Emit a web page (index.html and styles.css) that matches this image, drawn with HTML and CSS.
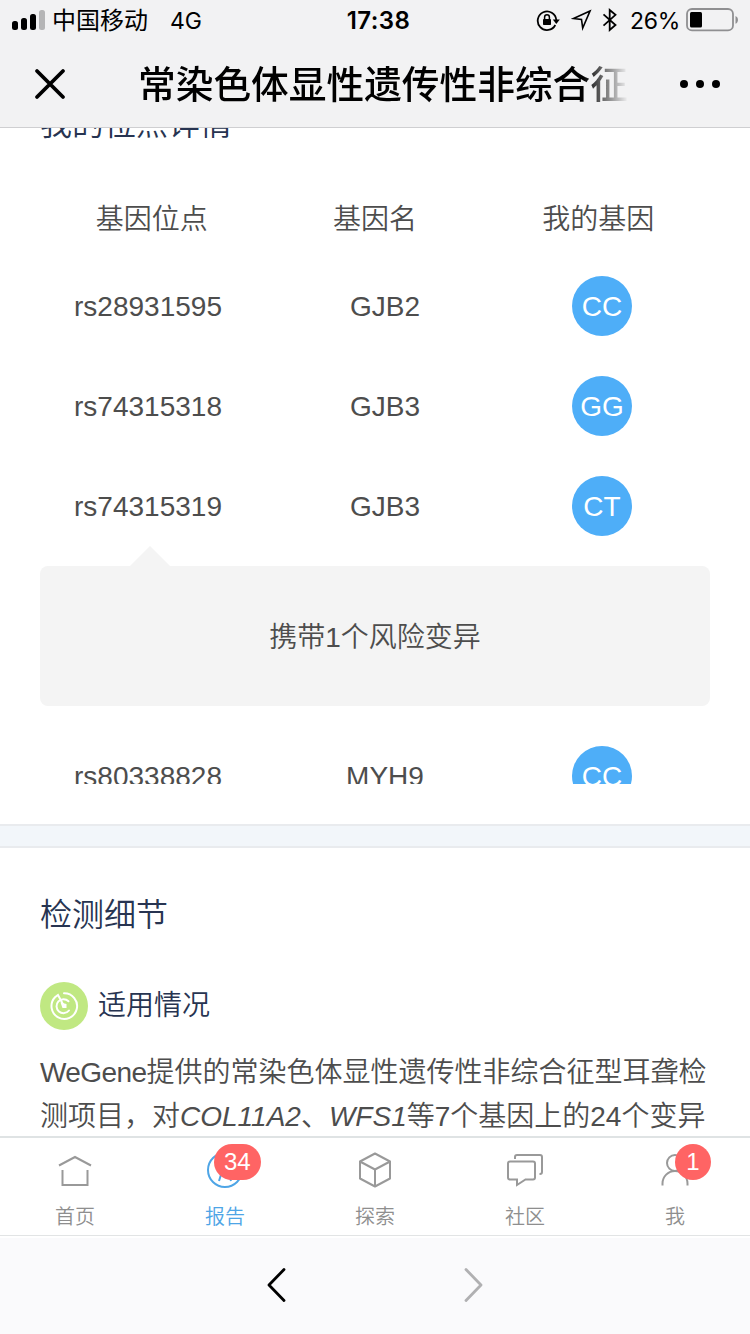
FILE: index.html
```html
<!DOCTYPE html>
<html lang="zh-CN">
<head>
  <meta charset="UTF-8" />
  <meta name="viewport" content="width=device-width, initial-scale=1.0"/>
  <title>常染色体显性遗传性非综合征型耳聋</title>
  <link rel="stylesheet" href="styles.css">
</head>
<body>

  <header class="header">
    <div class="status-bar">
      <div class="status-left">
        <svg class="signal" width="34" height="20" viewBox="0 0 34 20">
          <rect x="0" y="11" width="6" height="9" rx="2.5"/>
          <rect x="9" y="8" width="6" height="12" rx="2.5"/>
          <rect x="18" y="4" width="6" height="16" rx="2.5"/>
          <rect x="27" y="0" width="6" height="20" rx="2.5" fill="#b5b5b6"/>
        </svg>
        <span class="carrier">中国移动</span>
        <span class="network">4G</span>
      </div>
      <div class="time">17:38</div>
      <div class="status-right">
        <svg width="24" height="24" viewBox="0 0 24 24">
          <path d="M19.3 17A9.3 9.3 0 1 1 20.3 12" fill="none" stroke="#000" stroke-width="1.8"/>
          <path d="M16.8 11.5h7l-3.5 4.5z"/>
          <rect x="7" y="11" width="8" height="6" rx="0.8"/>
          <path d="M8.6 11V9.2a2.4 2.4 0 0 1 4.8 0V11" fill="none" stroke="#000" stroke-width="1.5"/>
        </svg>
        <svg class="location" width="22" height="22" viewBox="0 0 22 22">
          <path d="M19 2L2.5 9.6l8 .9 1.2 8.5z" fill="none" stroke="#000" stroke-width="1.6"/>
        </svg>
        <svg class="bluetooth" width="16" height="24" viewBox="0 0 16 24">
          <path d="M1.5 6.3L13.5 17l-5.8 5V2l5.8 4.8L1.5 17.7" fill="none" stroke="#000" stroke-width="1.8"/>
        </svg>
        <span class="battery-text">26%</span>
        <svg width="54" height="24" viewBox="0 0 54 24">
          <rect x="1" y="1" width="46" height="21.4" rx="5" fill="none" stroke="#8f8f91" stroke-width="1.8"/>
          <rect x="4" y="4" width="12" height="15.4" rx="1.5"/>
          <path d="M49.5 8c3.3 1.2 3.3 6.600 0 7.800z" fill="#8f8f91"/>
        </svg>
      </div>
    </div>
    <div class="nav-bar">
      <svg class="close" width="32" height="32" viewBox="0 0 32 32">
        <path d="M3 3L29 29M29 3L3 29" stroke="#000" stroke-width="3.8" stroke-linecap="round"/>
      </svg>
      <h1 class="nav-title">常染色体显性遗传性非综合征</h1>
      <svg class="more" width="40" height="8" viewBox="0 0 40 8">
        <circle cx="4" cy="4" r="4"/>
        <circle cx="20" cy="4" r="4"/>
        <circle cx="36" cy="4" r="4"/>
      </svg>
    </div>
  </header>

  <main class="content">
    <section class="card sites">
      <h2 class="card-title">我的位点详情</h2>
      <div class="site-table">
        <div class="site-head">
          <span>基因位点</span>
          <span>基因名</span>
          <span>我的基因</span>
        </div>
        <div class="site-row">
          <span>rs28931595</span>
          <span>GJB2</span>
          <span class="genotype">CC</span>
        </div>
        <div class="site-row">
          <span>rs74315318</span>
          <span>GJB3</span>
          <span class="genotype">GG</span>
        </div>
        <div class="site-row">
          <span>rs74315319</span>
          <span>GJB3</span>
          <span class="genotype">CT</span>
        </div>
        <div class="site-note">携带1个风险变异</div>
        <div class="site-row">
          <span>rs80338828</span>
          <span>MYH9</span>
          <span class="genotype">CC</span>
        </div>
      </div>
    </section>

    <section class="card details">
      <h2 class="card-title">检测细节</h2>
      <div class="sub-title">
        <svg width="48" height="48" viewBox="0 0 48 48">
          <circle cx="24" cy="24" r="24" fill="#c0e882"/>
          <g fill="none" stroke="#fff" stroke-width="2" stroke-linecap="round">
            <path d="M24 11.300a12.800 12.800 0 1 1-9 4L18 13l6 11"/>
            <path d="M28.500 19.200a7 7 0 1 0 .5 9.300"/>
          </g>
          <path d="M20.500 20.500l6 1.500v4h-4z" fill="#fff"/>
        </svg>
        <h3>适用情况</h3>
      </div>
      <p class="desc"><span class="brand">WeGene</span>提供的常染色体显性遗传性非综合征型耳聋检<br>测项目，对<em>COL11A2</em>、<em>WFS1</em>等7个基因上的24个变异</p>
    </section>
  </main>

  <nav class="tab-bar">
    <a class="tab">
      <svg width="40" height="40" viewBox="0 0 40 40">
        <path d="M4 15.500L20 7l16 8.500M7.500 20v15h25V20"/>
      </svg>
      <span>首页</span>
    </a>
    <a class="tab active">
      <svg width="40" height="40" viewBox="0 0 40 40">
        <circle cx="20" cy="20" r="17"/>
        <path d="M14 31l6-19 6 19M16 25h8"/>
      </svg>
      <span>报告</span>
      <b class="badge">34</b>
    </a>
    <a class="tab">
      <svg width="40" height="40" viewBox="0 0 40 40">
        <path d="M20 3.500l15 8v17l-15 8-15-8v-17zM5 11.500l15 8 15-8M20 19.500v17" stroke-linejoin="round"/>
      </svg>
      <span>探索</span>
    </a>
    <a class="tab">
      <svg width="40" height="40" viewBox="0 0 40 40">
        <path d="M10 9V7q0-2 2-2h23q2 0 2 2v15q0 2-2 2h-.5"/>
        <path d="M5 11.500h23q2 0 2 2v14q0 2-2 2h-7.500L12 35v-5.500H5q-2 0-2-2v-14q0-2 2-2z"/>
      </svg>
      <span>社区</span>
    </a>
    <a class="tab">
      <svg width="40" height="40" viewBox="0 0 40 40">
        <circle cx="20" cy="13" r="8"/>
        <path d="M7.500 35.500v-2a12.500 12.500 0 0 1 25 0v2"/>
      </svg>
      <span>我</span>
      <b class="badge">1</b>
    </a>
  </nav>

  <footer class="browser-bar">
    <svg width="20" height="36" viewBox="0 0 20 36">
      <path d="M18 2.500L3 18l15 15.500" stroke="#000"/>
    </svg>
    <svg width="20" height="36" viewBox="0 0 20 36">
      <path d="M2 2.500L17 18 2 33.500" stroke="#b0b0b2"/>
    </svg>
  </footer>

</body>
</html>
```

FILE: styles.css
```css
* {
  margin: 0;
  padding: 0;
  box-sizing: border-box;
}

body {
  width: 750px;
  height: 1334px;
  display: flex;
  flex-direction: column;
  overflow: hidden;
  background: #fff;
  color: #4d4d4d;
  font-family: 'Liberation Sans', 'Noto Sans CJK SC DemiLight', 'Noto Sans CJK SC', sans-serif;
  font-size: 28px;
  font-weight: 350;
}

svg {
  display: block;
  flex-shrink: 0;
}

/* header */
.header {
  height: 128px;
  flex-shrink: 0;
  background: #f2f2f3;
  border-bottom: 1px solid #cfcfd1;
  color: #000;
}

.status-bar {
  height: 40px;
  display: grid;
  grid-template-columns: 1fr auto 1fr;
  align-items: center;
  padding: 0 10px 0 12px;
  font-family: Inter, 'Noto Sans CJK SC', sans-serif;
  font-size: 24px;
  font-weight: 400;
  line-height: 36px;
}

.status-left,
.status-right {
  display: flex;
  align-items: center;
}

.status-right {
  justify-content: flex-end;
}

.carrier {
  margin-left: 6px;
  padding-top: 2px;
}

.network {
  margin-left: 22px;
  padding-top: 1px;
  font-size: 23px;
}

.time {
  padding: 2px 0 0 5px;
  font-weight: 600;
  font-size: 24px;
  letter-spacing: 0.4px;
}

.status-right svg:first-child {
  margin-right: 11px;
}

.bluetooth {
  margin-left: 9px;
}

.battery-text {
  margin: 0 6px 0 12px;
  padding-top: 2px;
  font-size: 23px;
  letter-spacing: -0.3px;
}

.nav-bar {
  height: 87px;
  display: flex;
  align-items: center;
  padding: 0 30px 0 34px;
}

.nav-title {
  width: 490px;
  margin: -3px auto 0 72px;
  white-space: nowrap;
  font-family: 'Noto Sans CJK SC', sans-serif;
  font-size: 37.7px;
  font-weight: 500;
  line-height: 60px;
  -webkit-mask-image: linear-gradient(to right, #000 445px, transparent 490px);
  mask-image: linear-gradient(to right, #000 445px, transparent 490px);
}

/* content */
.content {
  flex: 1;
  min-height: 0;
  overflow: hidden;
  background: #f2f6fa;
}

.card {
  padding: 0 40px;
  background: #fff;
}

.card-title {
  color: #273451;
  font-size: 32px;
  font-weight: 350;
  line-height: 48px;
}

.sites {
  margin-top: -28px;
  padding-bottom: 40px;
  border-bottom: 2px solid #e9ebee;
}

.site-table {
  height: 604px;
  margin-top: 32px;
  overflow: hidden;
}

.site-head {
  height: 76px;
  display: grid;
  grid-template-columns: repeat(3, 1fr);
  align-items: center;
  padding-bottom: 2px;
  text-align: center;
}

.site-row {
  height: 100px;
  display: grid;
  grid-template-columns: 216px 258px 176px;
  align-items: center;
  justify-items: center;
  line-height: 60px;
}

.site-row span {
  padding-top: 1px;
}

.site-row .genotype {
  width: 60px;
  height: 60px;
  border-radius: 50%;
  background: #4eaef8;
  color: #fff;
  text-align: center;
}

.site-note {
  position: relative;
  height: 140px;
  margin: 10px 0 20px;
  padding-top: 2px;
  border-radius: 8px;
  background: #f4f4f4;
  line-height: 140px;
  text-align: center;
}

.site-note::before {
  content: '';
  position: absolute;
  left: 90px;
  top: -20px;
  border: 20px solid transparent;
  border-top: 0;
  border-bottom-color: #f4f4f4;
}

.details {
  height: 300px;
  margin-top: 20px;
  padding-top: 43px;
  border-top: 2px solid #e9ebee;
}

.sub-title {
  display: flex;
  align-items: center;
  gap: 10px;
  margin-top: 43px;
  color: #273451;
}

.sub-title h3 {
  font-size: 28px;
  font-weight: 350;
  line-height: 48px;
}

.desc {
  margin-top: 21px;
  line-height: 44px;
  white-space: nowrap;
}

.brand {
  letter-spacing: -0.6px;
}

/* tabs */
.tab-bar {
  height: 100px;
  flex-shrink: 0;
  display: flex;
  background: #fff;
  border-top: 2px solid #dfe3e4;
  border-bottom: 1px solid #e2e4e5;
}

.tab {
  position: relative;
  flex: 1;
  display: flex;
  flex-direction: column;
  align-items: center;
  padding-top: 12px;
  color: #8e8e8e;
  font-size: 20px;
  line-height: 30px;
}

.tab svg {
  margin-bottom: 12px;
  fill: none;
  stroke: #999;
  stroke-width: 2;
}

.active {
  color: #4ea5e6;
}

.active svg {
  stroke: #4ea5e6;
}

.badge {
  position: absolute;
  left: 75px;
  top: 6px;
  min-width: 36px;
  height: 36px;
  padding: 0 10px;
  border-radius: 18px;
  background: #ff6464;
  color: #fff;
  font-size: 24px;
  font-weight: 400;
  line-height: 36px;
  text-align: center;
}

.active .badge {
  left: 64px;
}

/* browser bar */
.browser-bar {
  height: 98px;
  flex-shrink: 0;
  display: flex;
  align-items: center;
  justify-content: center;
  gap: 178px;
  padding-bottom: 2px;
  border-top: 2px solid #fff;
  background: #fafafc;
}

.browser-bar svg {
  fill: none;
  stroke-width: 2.8;
  stroke-linecap: round;
  stroke-linejoin: round;
}
```
